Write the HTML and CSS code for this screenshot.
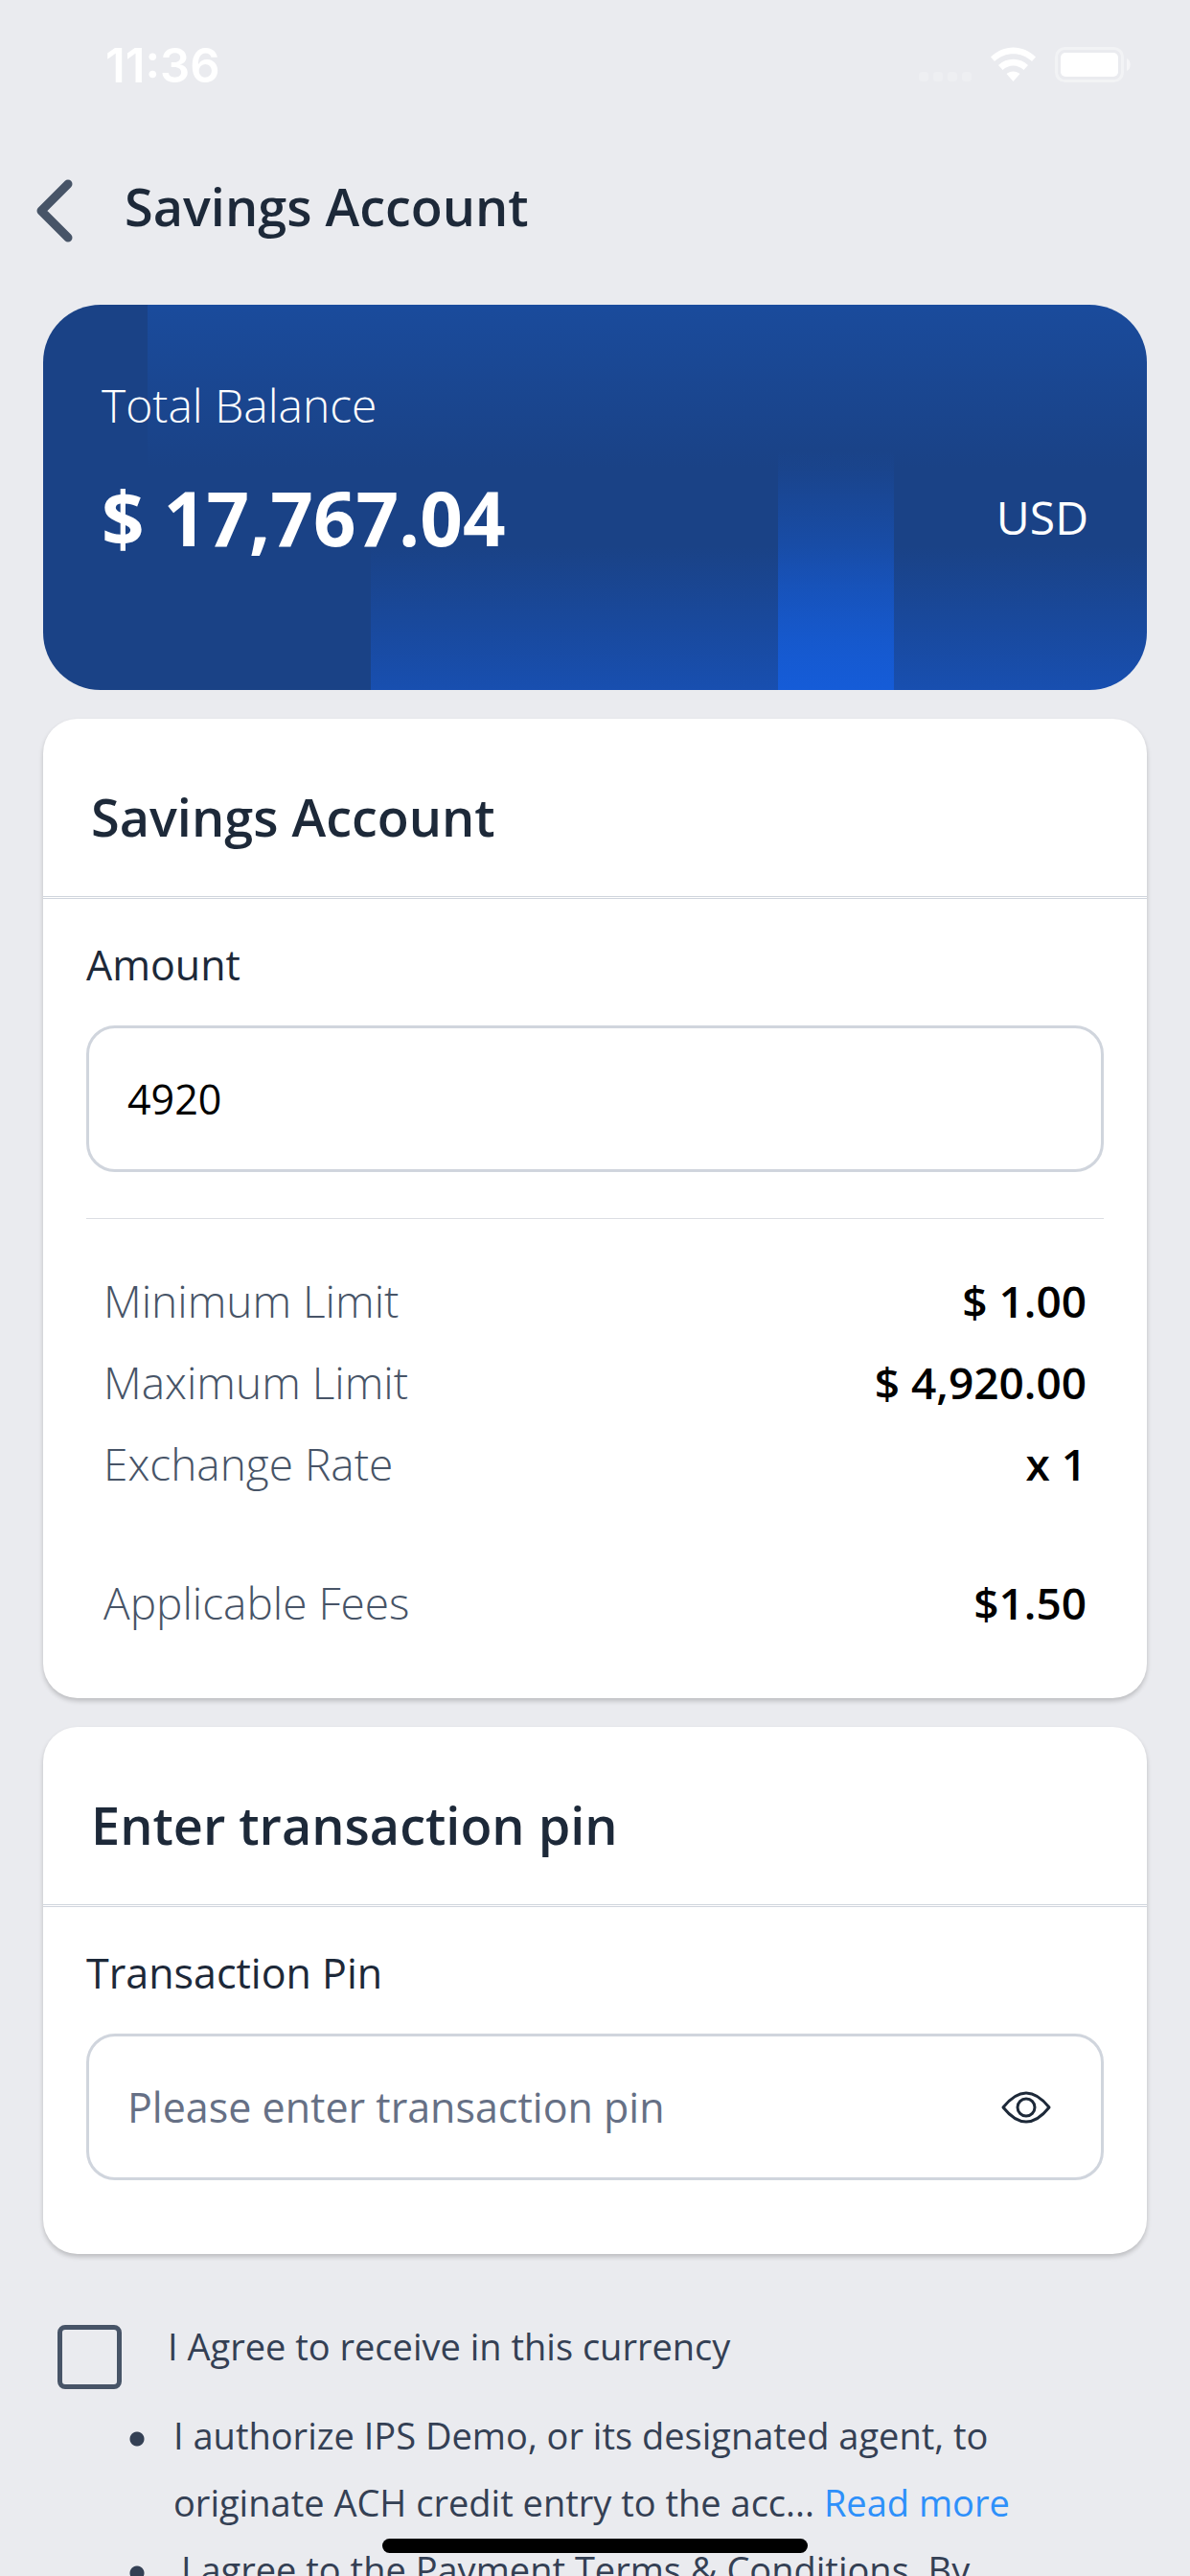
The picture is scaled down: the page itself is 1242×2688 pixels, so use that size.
FILE: index.html
```html
<!DOCTYPE html>
<html lang="en">
<head>
    <meta charset="UTF-8">
    <meta name="viewport" content="width=device-width, initial-scale=1.0">
    <title>Savings Account</title>
    <link rel="stylesheet" href="styles.css">
</head>
<body>
    <div class="statusBar">
        <span class="time">11:36</span>
        <svg class="statusIcons" width="224" height="40" viewBox="0 0 224 40" fill="#fff" aria-hidden="true">
            <g opacity="0.2">
                <rect x="1" y="27" width="10" height="10" rx="3"/>
                <rect x="16" y="27" width="10" height="10" rx="3"/>
                <rect x="31" y="27" width="10" height="10" rx="3"/>
                <rect x="46" y="27" width="10" height="10" rx="3"/>
            </g>
            <path d="M76 11.500C89-2 110-2 123 11.500L119 16C108 5.500 91 5.500 80 16z"/>
            <path d="M84 20C92.500 11.500 106.500 11.500 115 20L110.500 25C104 19 95 19 88.500 25z"/>
            <path d="M92.500 29C96.500 25.500 102.500 25.500 106.500 29L99.500 37z"/>
            <rect x="144.500" y="2.500" width="69" height="34" rx="9" fill="none" stroke="#fff" stroke-width="3" opacity="0.4"/>
            <rect x="149" y="7" width="60" height="25" rx="5"/>
            <path d="M218 13c5 2 5 11 0 13z" opacity="0.5"/>
        </svg>
    </div>

    <header class="pageHeader">
        <button type="button" class="backButton" aria-label="Back">
            <svg width="38" height="66" viewBox="0 0 38 66" fill="none" stroke="#475467" stroke-width="9" stroke-linecap="round" stroke-linejoin="round"><path d="M33 5L5 33L33 61"/></svg>
        </button>
        <h1>Savings Account</h1>
    </header>

    <main>
        <section class="balance">
            <div class="balanceLabel">Total Balance</div>
            <div class="balanceRow">
                <strong>$ 17,767.04</strong>
                <span>USD</span>
            </div>
        </section>

        <section class="card">
            <h2>Savings Account</h2>
            <div class="cardBody">
                <label for="amount">Amount</label>
                <div class="field">
                    <input type="text" id="amount" name="amount" inputmode="decimal" value="4920">
                </div>
                <hr>
                <dl class="details">
                    <div><dt>Minimum Limit</dt><dd>$ 1.00</dd></div>
                    <div><dt>Maximum Limit</dt><dd>$ 4,920.00</dd></div>
                    <div><dt>Exchange Rate</dt><dd>x 1</dd></div>
                    <div class="fees"><dt>Applicable Fees</dt><dd>$1.50</dd></div>
                </dl>
            </div>
        </section>

        <section class="card">
            <h2>Enter transaction pin</h2>
            <div class="cardBody pinBody">
                <label for="pin">Transaction Pin</label>
                <div class="field">
                    <input type="password" id="pin" name="pin" placeholder="Please enter transaction pin">
                    <button type="button" aria-label="Show pin">
                        <svg width="52" height="34" viewBox="0 0 52 34" fill="none" stroke="#1d2939" stroke-width="3"><path d="M2 17Q26-13 50 17Q26 47 2 17z" stroke-linejoin="round"/><circle cx="26" cy="17" r="9"/></svg>
                    </button>
                </div>
            </div>
        </section>

        <div class="agree">
            <input type="checkbox" id="agree" name="agree">
            <label for="agree">I Agree to receive in this currency</label>
        </div>
        <ul class="terms">
            <li>I authorize IPS Demo, or its designated agent, to originate ACH credit entry to the acc... <a href="#">Read more</a></li>
            <li class="inset">I agree to the Payment Terms &amp; Conditions. By</li>
        </ul>
    </main>
    <div class="homeBar"></div>
</body>
</html>
```
FILE: styles.css
```css
*{
    box-sizing: border-box;
}

body{
    margin: 0;
    height: 100vh;
    overflow: hidden;
    background-color: #eaebef;
    color: #1d2939;
    font-family: "Open Sans", "Noto Sans", sans-serif;
}

h1, h2, dl, dd, ul{
    margin: 0;
    padding: 0;
}

button{
    display: flex;
    padding: 0;
    border: 0;
    background: none;
    cursor: pointer;
}

.statusBar{
    display: flex;
    justify-content: space-between;
    align-items: center;
    height: 136px;
    padding: 0 60px 0 110px;
    color: #fff;
}

.time{
    font: 600 49px "Inter", sans-serif;
}

.pageHeader{
    display: flex;
    align-items: center;
    gap: 54px;
    height: 168px;
    padding-left: 38px;
}

h1, h2{
    font-size: 54px;
    font-weight: 600;
    line-height: 72px;
}

h1{
    padding-bottom: 10px;
}

main{
    display: flex;
    flex-direction: column;
    gap: 30px;
    padding: 14px 45px 0;
}

.balance{
    height: 402px;
    padding: 72px 61px;
    border-radius: 60px;
    color: #fff;
    background:
        linear-gradient(#1b438600, #155cd8) 767px 100% / 121px 250px no-repeat,
        linear-gradient(#1a428600, #184fb0) 342px 100% / 100% 150px no-repeat,
        linear-gradient(#1a4b9c, #1a428600) 109px 0 / 100% 170px no-repeat,
        #1a4286;
}

.balanceLabel{
    font-size: 48px;
    font-weight: 300;
    line-height: 66px;
}

.balanceRow{
    display: flex;
    justify-content: space-between;
    align-items: center;
    margin-top: 28px;
    font-size: 48px;
    line-height: 112px;
}

.balanceRow strong{
    font-size: 78px;
}

.card{
    background-color: #fff;
    border-radius: 36px;
    box-shadow: 0 3px 5px rgba(0, 0, 0, 0.2);
}

.card h2{
    padding: 66px 50px 47px;
    border-bottom: 3px double #d0d5dd;
}

.cardBody{
    padding: 40px 45px 57px;
}

.cardBody label{
    display: block;
    font-size: 43px;
    line-height: 58px;
}

.field{
    display: flex;
    align-items: center;
    height: 153px;
    margin-top: 34px;
    padding: 0 52px 0 40px;
    border: 3px solid #d0d5dd;
    border-radius: 30px;
}

.field input{
    flex: 1;
    min-width: 0;
    padding: 0;
    border: 0;
    outline: 0;
    background: none;
    color: #000;
    font: 43px "Open Sans", sans-serif;
}

.field input::placeholder{
    color: #667085;
}

hr{
    height: 1px;
    margin: 48px 0 43px;
    border: 0;
    background-color: #dcdee3;
}

.details{
    padding: 0 18px;
}

.details div{
    display: flex;
    justify-content: space-between;
    font-size: 46px;
    line-height: 85px;
}

.details .fees{
    margin-top: 60px;
}

dt{
    color: #475467;
    font-weight: 300;
}

dd{
    color: #000;
    font-weight: 600;
}

.cardBody.pinBody{
    padding-bottom: 77px;
}

.agree{
    display: flex;
    gap: 48px;
    padding: 44px 15px 0;
    color: #344054;
    font-size: 38px;
    line-height: 44px;
}

.agree input{
    appearance: none;
    width: 67px;
    height: 67px;
    margin: 0;
    border: 5px solid #475467;
    border-radius: 8px;
}

.terms{
    list-style: none;
    margin-top: -17px;
    padding: 0 90px;
    color: #344054;
    font-size: 38px;
    line-height: 70px;
}

.terms li{
    padding-left: 46px;
    background: radial-gradient(circle, #344054 7px, transparent 8px) 0 31px / 16px 16px no-repeat;
}

.terms .inset{
    padding-left: 54px;
}

.terms a{
    color: #2e90fa;
    text-decoration: none;
}

.homeBar{
    position: fixed;
    bottom: 24px;
    left: 50%;
    width: 444px;
    height: 15px;
    margin-left: -222px;
    border-radius: 8px;
    background-color: #000;
}
```
